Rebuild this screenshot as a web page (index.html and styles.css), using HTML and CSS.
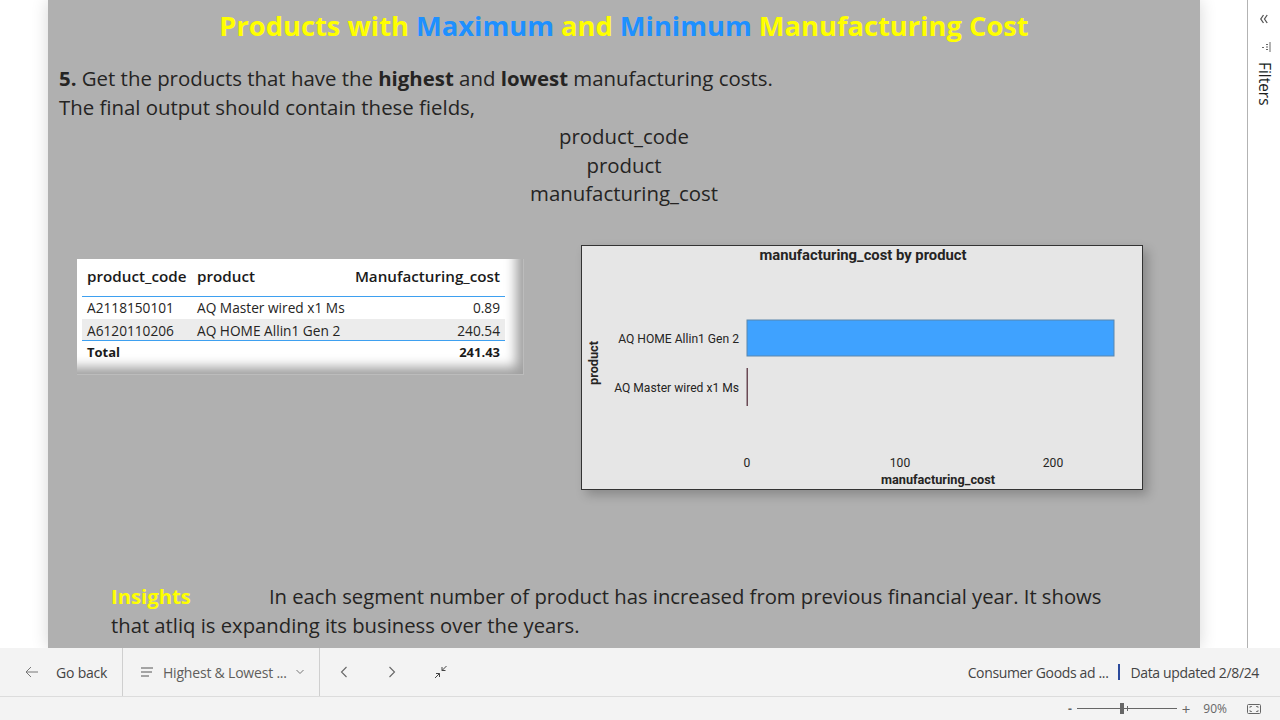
FILE: index.html
```html
<!DOCTYPE html>
<html lang="en">
<head>
    <meta charset="UTF-8">
    <title>Highest &amp; Lowest Manufacturing Cost</title>
    <link rel="stylesheet" href="styles.css">
</head>
<body>
    <div class="workspace">
        <main class="canvas">
            <h1 class="title">Products with <span class="blue">Maximum</span> and <span class="blue">Minimum</span> Manufacturing Cost</h1>
            <section class="question">
                <p><b>5.</b> Get the products that have the <b>highest</b> and <b>lowest</b> manufacturing costs.</p>
                <p>The final output should contain these fields,</p>
                <ul class="fields">
                    <li>product_code</li>
                    <li>product</li>
                    <li>manufacturing_cost</li>
                </ul>
            </section>
            <div class="visuals">
                <div class="table-card">
                    <table class="cost-table">
                        <thead>
                            <tr><th class="col-code">product_code</th><th>product</th><th class="num">Manufacturing_cost</th></tr>
                        </thead>
                        <tbody>
                            <tr><td>A2118150101</td><td>AQ Master wired x1 Ms</td><td class="num">0.89</td></tr>
                            <tr class="alt"><td>A6120110206</td><td>AQ HOME Allin1 Gen 2</td><td class="num">240.54</td></tr>
                        </tbody>
                        <tfoot>
                            <tr><td>Total</td><td></td><td class="num">241.43</td></tr>
                        </tfoot>
                    </table>
                </div>
                <div class="chart-card">
                    <svg class="chart" width="560" height="243" viewBox="0 0 560 243">
                        <text class="chart-title" x="281" y="14" text-anchor="middle">manufacturing_cost by product</text>
                        <text class="axis-title" transform="translate(16 117) rotate(-90)" text-anchor="middle">product</text>
                        <text class="tick" x="157" y="97" text-anchor="end">AQ HOME Allin1 Gen 2</text>
                        <text class="tick" x="157" y="146" text-anchor="end">AQ Master wired x1 Ms</text>
                        <rect x="165" y="74" width="367" height="36" fill="#3fa2ff" stroke="#5b86ac" stroke-width="1"/>
                        <rect x="164.500" y="122" width="1.500" height="38" fill="#6b4a55"/>
                        <text class="tick" x="165" y="221" text-anchor="middle">0</text>
                        <text class="tick" x="318" y="221" text-anchor="middle">100</text>
                        <text class="tick" x="471" y="221" text-anchor="middle">200</text>
                        <text class="axis-title" x="356" y="238" text-anchor="middle">manufacturing_cost</text>
                    </svg>
                </div>
            </div>
            <div class="insights">
                <p class="insights-first"><span class="insights-label">Insights</span><span>In each segment number of product has increased from previous financial year. It shows</span></p>
                <p>that atliq is expanding its business over the years.</p>
            </div>
        </main>
        <aside class="filters">
            <svg class="icon-collapse" width="8" height="10" viewBox="0 0 8 10">
                <path d="M3.500 1 .8 5l2.700 4M7.200 1 4.500 5l2.700 4" fill="none" stroke="#555" stroke-width="1.300"/>
            </svg>
            <svg class="icon-filter" width="10" height="10" viewBox="0 0 10 10">
                <path d="M1 5.500h2M5 2.500h2M5 5h2M5 7.500h2M9 0v10" fill="none" stroke="#666" stroke-width="1"/>
            </svg>
            <span class="filters-label">Filters</span>
        </aside>
    </div>
    <nav class="navbar">
        <div class="nav-item back">
            <svg width="14" height="12" viewBox="0 0 14 12">
                <path d="M6 1 1 6l5 5M1 6h12" fill="none" stroke="#777" stroke-width="1"/>
            </svg>
            <span>Go back</span>
        </div>
        <div class="nav-item page">
            <svg width="14" height="10" viewBox="0 0 14 10">
                <path d="M1 1h12M1 5h11M1 9h8" fill="none" stroke="#555" stroke-width="1"/>
            </svg>
            <span>Highest &amp; Lowest ...</span>
            <svg class="chevron" width="10" height="6" viewBox="0 0 10 6">
                <path d="m1.500 1 3.500 3.500L8.500 1" fill="none" stroke="#777" stroke-width="1"/>
            </svg>
        </div>
        <div class="nav-arrows">
            <svg width="8" height="12" viewBox="0 0 8 12">
                <path d="M6.500 1 1.500 6l5 5" fill="none" stroke="#666" stroke-width="1.100"/>
            </svg>
            <svg width="8" height="12" viewBox="0 0 8 12">
                <path d="m1.500 1 5 5-5 5" fill="none" stroke="#666" stroke-width="1.100"/>
            </svg>
            <svg width="14" height="14" viewBox="0 0 14 14">
                <path d="M12.500 1 8 5.500M8 2v3.500h3.500M1 13l4.500-4.500M2 8.500h3.500V12" fill="none" stroke="#444" stroke-width="1"/>
            </svg>
        </div>
        <div class="nav-right">
            <span>Consumer Goods ad ...</span>
            <span class="divider"></span>
            <span>Data updated 2/8/24</span>
        </div>
    </nav>
    <footer class="statusbar">
        <span class="zoom-sign">-</span>
        <div class="slider"><span class="thumb"></span><span class="mark"></span></div>
        <span class="zoom-sign plus">+</span>
        <span class="zoom-value">90%</span>
        <svg width="14" height="10" viewBox="0 0 14 10">
            <rect x=".5" y=".5" width="13" height="9" rx="1" fill="none" stroke="#666"/>
            <path d="M3 4V2.500h2M11 4V2.500H9M3 6v1.500h2M11 6v1.500H9" fill="none" stroke="#666" stroke-width=".8"/>
        </svg>
    </footer>
</body>
</html>
```

FILE: styles.css
```css
* {
    box-sizing: border-box;
}
html, body {
    margin: 0;
    height: 720px;
    overflow: hidden;
}
body {
    display: flex;
    flex-direction: column;
    font-family: "Open Sans", "Noto Sans", sans-serif;
    color: #252423;
    background: #fff;
}
p, ul, h1 {
    margin: 0;
    padding: 0;
}

.workspace {
    height: 648px;
    display: flex;
    padding-left: 48px;
    overflow: hidden;
}
.canvas {
    width: 1152px;
    height: 648px;
    flex: none;
    background: #b0b0b0;
    box-shadow: 0 0 16px rgba(0, 0, 0, .16);
}
.title {
    height: 52px;
    line-height: 52px;
    text-align: center;
    font-size: 27.300px;
    font-weight: 700;
    color: #ffff00;
}
.blue {
    color: #1e90ff;
}
.question {
    padding: 12px 11px 0;
    font-size: 20.400px;
    line-height: 28.500px;
}
.fields {
    list-style: none;
    margin-top: 1px;
    text-align: center;
}

.visuals {
    display: flex;
    align-items: flex-start;
    margin-top: 37px;
    padding-left: 29px;
}
.table-card {
    width: 447px;
    height: 116px;
    margin-top: 14px;
    padding: 0 19px 0 5px;
    background: #fff;
    box-shadow: inset -1px -1px 0 #bcbcbc, inset -14px -14px 12px -6px #a0a0a0;
}
.cost-table {
    width: 423px;
    border-collapse: separate;
    border-spacing: 0;
    font-size: 13.700px;
    line-height: 16px;
}
.cost-table th {
    height: 38px;
    padding: 0 5px 2px;
    text-align: left;
    font-size: 15.200px;
    font-weight: 600;
    color: #1a1a1a;
    border-bottom: 1px solid #3ea0f0;
}
.col-code {
    width: 110px;
}
.cost-table td {
    height: 22px;
    padding: 0 5px;
    white-space: nowrap;
}
.cost-table .num {
    text-align: right;
}
.cost-table .alt td {
    padding-top: 4px;
    background: #ececec;
    border-bottom: 1px solid #3ea0f0;
}
.cost-table tfoot td {
    font-weight: 700;
    font-size: 13px;
    color: #1a1a1a;
}

.chart-card {
    width: 562px;
    height: 245px;
    margin-left: 57px;
    background: #e6e6e6;
    border: 1px solid #333;
    box-shadow: 5px 5px 10px rgba(0, 0, 0, .22);
}
.chart {
    display: block;
    font-family: Roboto, sans-serif;
}
.chart-title {
    font-size: 14.800px;
    font-weight: 700;
    fill: #252423;
}
.axis-title {
    font-size: 12.700px;
    font-weight: 700;
    fill: #252423;
}
.tick {
    font-size: 12.100px;
    fill: #252423;
}

.insights {
    margin-top: 92px;
    padding-left: 63px;
    font-size: 20.250px;
    line-height: 29px;
    white-space: nowrap;
}
.insights-label {
    margin-right: 78px;
    font-weight: 700;
    color: #ffff00;
}

.filters {
    width: 33px;
    margin-left: 47px;
    flex: none;
    border-left: 1px solid #b3b3b3;
    background: #fff;
    display: flex;
    flex-direction: column;
    align-items: center;
    padding-top: 14px;
}
.icon-filter {
    margin: 18px 0 0 3px;
}
.filters-label {
    margin-top: 10px;
    writing-mode: vertical-rl;
    font-size: 15.400px;
    color: #201f1e;
}

.navbar {
    height: 49px;
    flex: none;
    display: flex;
    align-items: center;
    background: #f3f3f3;
    border-bottom: 1px solid #dcdcdc;
    font-size: 14px;
}
.nav-item {
    height: 48px;
    display: flex;
    align-items: center;
    border-right: 1px solid #cfcfcf;
}
.nav-item.back {
    width: 123px;
    padding-left: 25px;
    gap: 17px;
    color: #444;
}
.nav-item.page {
    width: 197px;
    padding-left: 17px;
    gap: 9px;
    color: #605e5c;
}
.nav-item span {
    white-space: nowrap;
    letter-spacing: -.2px;
}
.chevron {
    margin-left: -1px;
}
.nav-arrows {
    display: flex;
    align-items: center;
    padding-left: 20px;
    gap: 40px;
}
.nav-arrows svg:last-child {
    margin-left: -2px;
}
.nav-right {
    margin-left: auto;
    padding-right: 21px;
    display: flex;
    align-items: center;
    gap: 10px;
    color: #444;
    letter-spacing: -.35px;
}
.divider {
    width: 2px;
    height: 16px;
    background: #2b4a9c;
}

.statusbar {
    height: 23px;
    flex: none;
    display: flex;
    align-items: center;
    justify-content: flex-end;
    padding-right: 19px;
    background: #f3f3f3;
    font-size: 12px;
    color: #666;
}
.zoom-sign {
    font-weight: 700;
    margin-right: 5px;
}
.zoom-sign.plus {
    margin: 0 0 0 5px;
    font-weight: 400;
    font-size: 15px;
}
.slider {
    position: relative;
    width: 100px;
    height: 1px;
    background: #666;
}
.thumb {
    position: absolute;
    left: 43px;
    top: -5px;
    width: 4px;
    height: 11px;
    background: #666;
}
.mark {
    position: absolute;
    left: 50px;
    top: -2px;
    width: 1px;
    height: 5px;
    background: #666;
}
.zoom-value {
    margin: 0 20px 0 13px;
}
```
